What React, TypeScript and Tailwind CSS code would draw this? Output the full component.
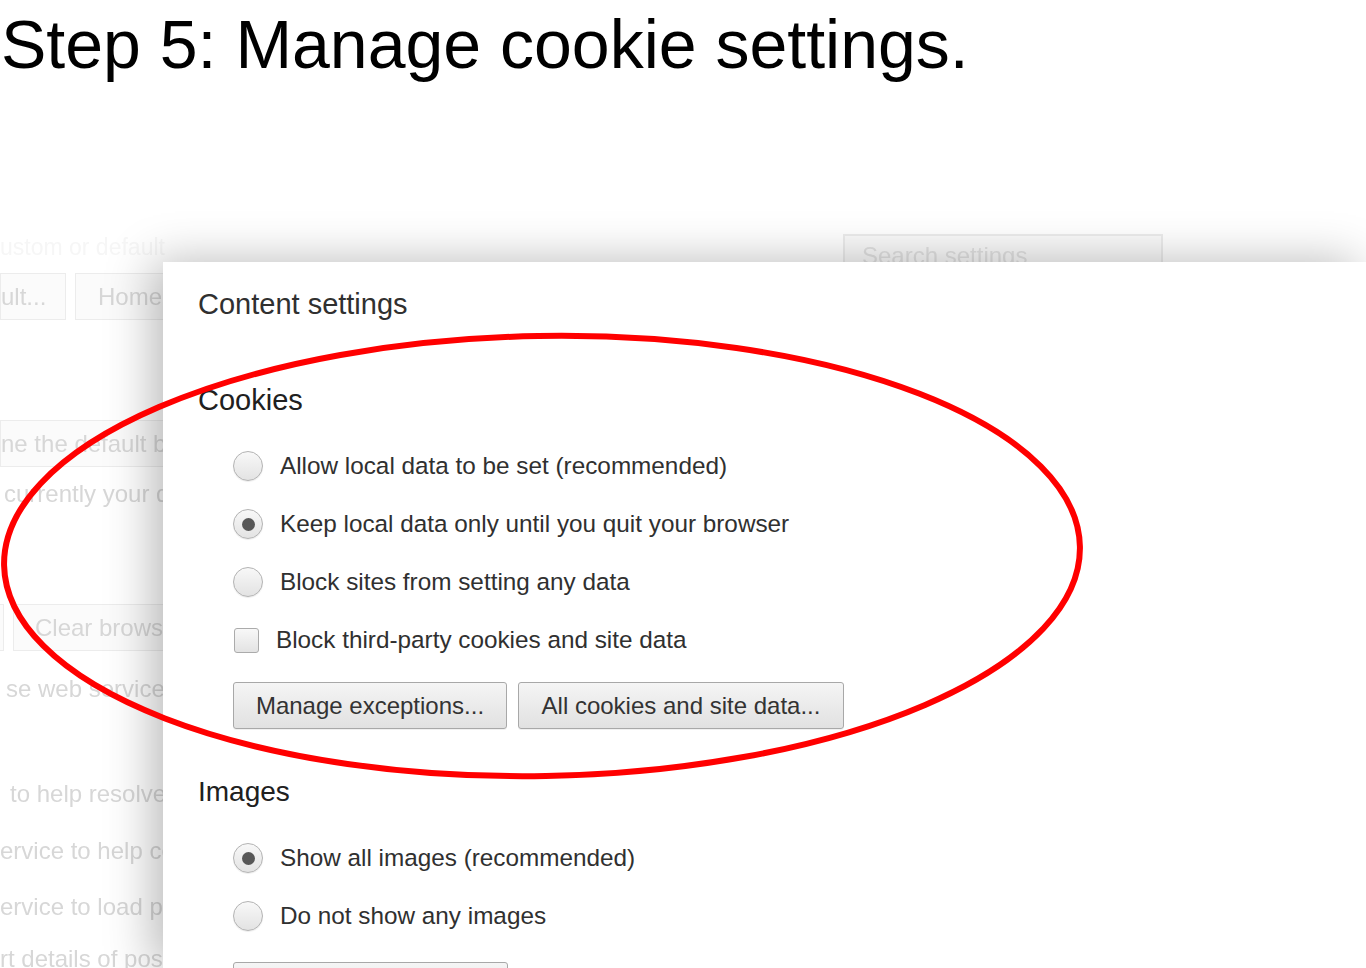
import React from "react";

function Radio({ checked }: { checked?: boolean }) {
  return (
    <div className="w-[30px] h-[30px] rounded-full border border-[#b3b3b3] bg-gradient-to-b from-[#f8f8f8] to-[#e3e3e3] shadow-[0_1px_1px_rgba(0,0,0,0.08)] flex items-center justify-center shrink-0">
      {checked && <div className="w-[13px] h-[13px] rounded-full bg-[#575757]" />}
    </div>
  );
}

function RadioRow({ checked, label }: { checked?: boolean; label: string }) {
  return (
    <div className="h-[58px] flex items-center pl-[35px]">
      <Radio checked={checked} />
      <span className="ml-[17px] text-[24.3px] leading-[30px] text-[#303030]">{label}</span>
    </div>
  );
}

function Btn({ label, w }: { label?: string; w: string }) {
  return (
    <div
      className={`${w} h-[47px] rounded-[3px] border border-[#a8a8a8] bg-gradient-to-b from-[#f5f5f5] to-[#e1e1e1] flex items-center justify-center text-[24px] text-[#333] shadow-[0_1px_0_rgba(0,0,0,0.06)]`}
    >
      {label}
    </div>
  );
}

const faded = "text-[24px] leading-[26px] text-[#d7d7d7] blur-[0.5px] whitespace-nowrap";

export default function App() {
  return (
    <div
      className="relative w-[1366px] h-[968px] overflow-hidden bg-white"
      style={{ fontFamily: '"Liberation Sans", Arial, sans-serif' }}
    >
      {/* Title */}
      <div className="h-[234px] pt-[10px] pl-[1px]">
        <h1 className="text-[68px] leading-[68px] text-black whitespace-nowrap">
          Step 5: Manage cookie settings.
        </h1>
      </div>

      {/* Faded background settings page */}
      <div className="flex">
        <div className="w-[843px]">
          <div className="text-[23px] leading-[26px] text-[#f6f6f6] blur-[0.7px] whitespace-nowrap">
            ustom or default
          </div>
        </div>
        <div className="w-[320px] h-[44px] border-2 border-[#ececec] bg-[#fafafa] pl-[17px] flex items-center text-[24px] text-[#e2e2e2] blur-[0.4px] whitespace-nowrap">
          Search settings
        </div>
      </div>
      <div className="flex gap-[9px] -mt-[5px]">
        <div className="w-[66px] h-[47px] border border-[#ececec] bg-[#fbfbfb] flex items-center">
          <span className={faded}>ult...</span>
        </div>
        <div className="w-[150px] h-[47px] border border-[#ececec] bg-[#fbfbfb] flex items-center pl-[22px]">
          <span className={faded}>Home</span>
        </div>
      </div>
      <div className="mt-[100px] w-[400px] h-[47px] border border-[#ececec] bg-[#fbfbfb] flex items-center">
        <span className={faded}>ne the default browser</span>
      </div>
      <div className={`${faded} mt-[14px] ml-[4px]`}>currently your default</div>
      <div className="mt-[97px] flex">
        <div className="w-[4px] h-[47px] border border-l-0 border-[#ececec] bg-[#fbfbfb]" />
        <div className="ml-[9px] w-[300px] h-[47px] border border-[#ececec] bg-[#fbfbfb] flex items-center pl-[21px]">
          <span className={faded}>Clear browsing data...</span>
        </div>
      </div>
      <div className={`${faded} mt-[25px] ml-[6px]`}>se web service</div>
      <div className={`${faded} mt-[79px] ml-[10px]`}>to help resolve</div>
      <div className={`${faded} mt-[31px]`}>ervice to help complete</div>
      <div className={`${faded} mt-[30px]`}>ervice to load pages</div>
      <div className={`${faded} mt-[26px]`}>rt details of possible</div>

      {/* Content settings dialog overlay */}
      <div className="absolute left-[163px] top-[262px] right-0 bottom-0 bg-white shadow-[-10px_0_45px_rgba(0,0,0,0.28)] pt-[25px] pl-[35px]">
        <div className="text-[29px] leading-[34px] text-[#303030]">Content settings</div>

        <div className="mt-[62px] text-[29px] leading-[34px] text-[#202020]">Cookies</div>
        <div className="mt-[20px]">
          <RadioRow label="Allow local data to be set (recommended)" />
          <RadioRow checked label="Keep local data only until you quit your browser" />
          <RadioRow label="Block sites from setting any data" />
          <div className="h-[58px] flex items-center pl-[36px]">
            <div className="w-[25px] h-[25px] rounded-[3px] border border-[#ababab] bg-gradient-to-b from-[#f8f8f8] to-[#e3e3e3] shrink-0" />
            <span className="ml-[17px] text-[24.3px] leading-[30px] text-[#303030]">
              Block third-party cookies and site data
            </span>
          </div>
        </div>
        <div className="mt-[13px] pl-[35px] flex gap-[11px]">
          <Btn w="w-[274px]" label="Manage exceptions..." />
          <Btn w="w-[326px]" label="All cookies and site data..." />
        </div>

        <div className="mt-[46px] text-[28px] leading-[34px] text-[#202020]">Images</div>
        <div className="mt-[20px]">
          <RadioRow checked label="Show all images (recommended)" />
          <RadioRow label="Do not show any images" />
        </div>
        <div className="mt-[17px] pl-[35px]">
          <Btn w="w-[275px]" />
        </div>
      </div>

      {/* Red annotation ellipse */}
      <svg
        className="absolute left-0 top-0 pointer-events-none"
        width="1366"
        height="968"
        viewBox="0 0 1366 968"
      >
        <ellipse
          cx="542"
          cy="556"
          rx="538"
          ry="220"
          fill="none"
          stroke="#ff0000"
          strokeWidth="6"
          transform="rotate(-1 542 556)"
        />
      </svg>
    </div>
  );
}
